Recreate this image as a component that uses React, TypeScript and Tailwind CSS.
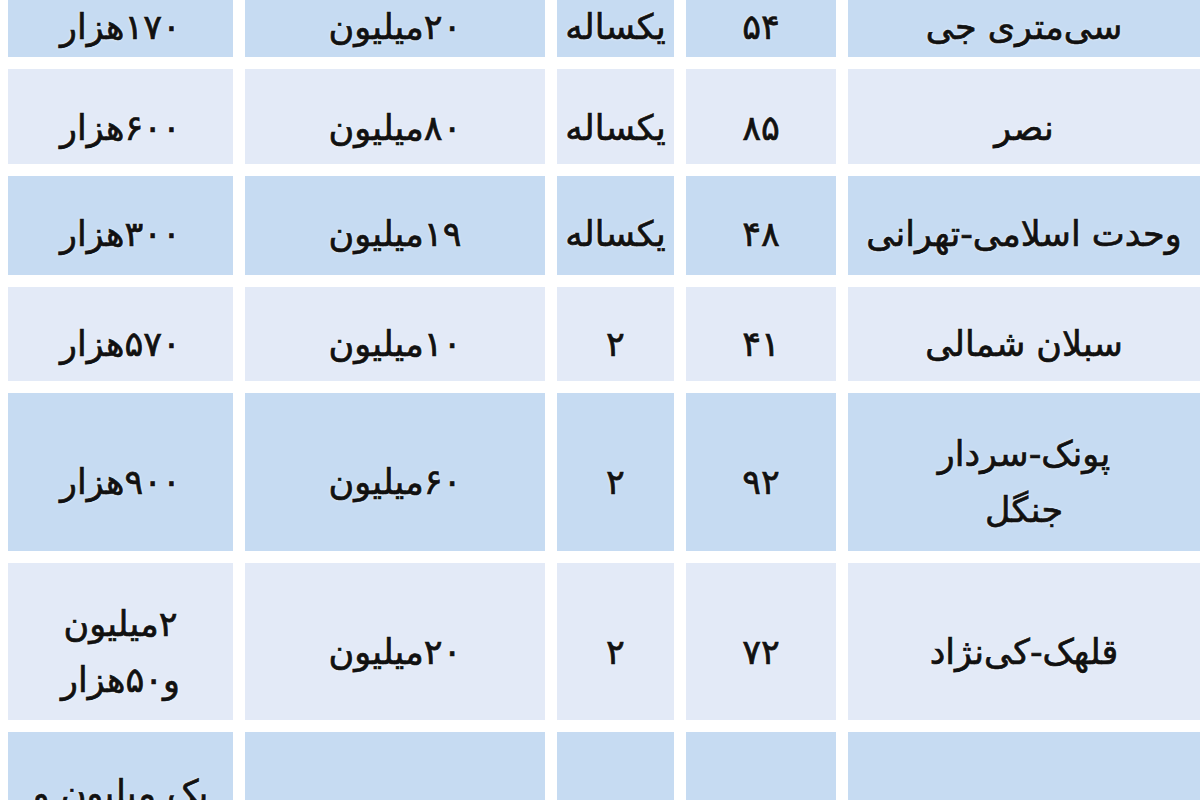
import * as React from "react";

type Row = {
  h: string;
  pad: string;
  tone: "dark" | "light";
  cells: string[][];
};

const rows: Row[] = [
  { h: "h-[57px]", pad: "pb-[4px]", tone: "dark", cells: [["۱۷۰هزار"], ["۲۰میلیون"], ["یکساله"], ["۵۴"], ["سی‌متری جی"]] },
  { h: "h-[95px]", pad: "pt-[22px]", tone: "light", cells: [["۶۰۰هزار"], ["۸۰میلیون"], ["یکساله"], ["۸۵"], ["نصر"]] },
  { h: "h-[99px]", pad: "pt-[16px]", tone: "dark", cells: [["۳۰۰هزار"], ["۱۹میلیون"], ["یکساله"], ["۴۸"], ["وحدت اسلامی-تهرانی"]] },
  { h: "h-[94px]", pad: "pt-[20px]", tone: "light", cells: [["۵۷۰هزار"], ["۱۰میلیون"], ["۲"], ["۴۱"], ["سبلان شمالی"]] },
  { h: "h-[158px]", pad: "pt-[20px]", tone: "dark", cells: [["۹۰۰هزار"], ["۶۰میلیون"], ["۲"], ["۹۲"], ["پونک-سردار", "جنگل"]] },
  { h: "h-[157px]", pad: "pt-[20px]", tone: "light", cells: [["۲میلیون", "و۵۰هزار"], ["۲۰میلیون"], ["۲"], ["۷۲"], ["قلهک-کی‌نژاد"]] },
  // last row is cut by the bottom edge of the picture
  { h: "h-[158px]", pad: "pt-[20px]", tone: "dark", cells: [["یک میلیون و", "۲۰۰هزار"], [""], [""], [""], [""]] },
];

// rent, deposit, age, area, neighbourhood (left to right)
const cols = ["w-[225px]", "w-[300px]", "w-[117px]", "w-[150px]", "flex-1"];

const cellText =
  "font-['DejaVu_Sans',sans-serif] text-[35px] leading-[56px] text-[#111] whitespace-nowrap [-webkit-text-stroke:0.7px_#111] [text-shadow:0_0_3px_#fff]";

export default function App() {
  return (
    <div className="h-[800px] w-[1200px] overflow-hidden bg-white pl-[8px]">
      <div className="flex flex-col gap-[12px]">
        {rows.map((row, i) => (
          <div key={i} className={["flex gap-[12px]", row.h].join(" ")}>
            {row.cells.map((lines, j) => (
              <div
                key={j}
                dir="rtl"
                className={[
                  cols[j],
                  row.pad,
                  "flex shrink-0 flex-col items-center justify-center",
                  row.tone === "dark" ? "bg-[#c6dbf2]" : "bg-[#e3eaf7]",
                  cellText,
                ].join(" ")}
              >
                {lines.map((t, k) => (
                  <div key={k}>{t}</div>
                ))}
              </div>
            ))}
          </div>
        ))}
      </div>
    </div>
  );
}
